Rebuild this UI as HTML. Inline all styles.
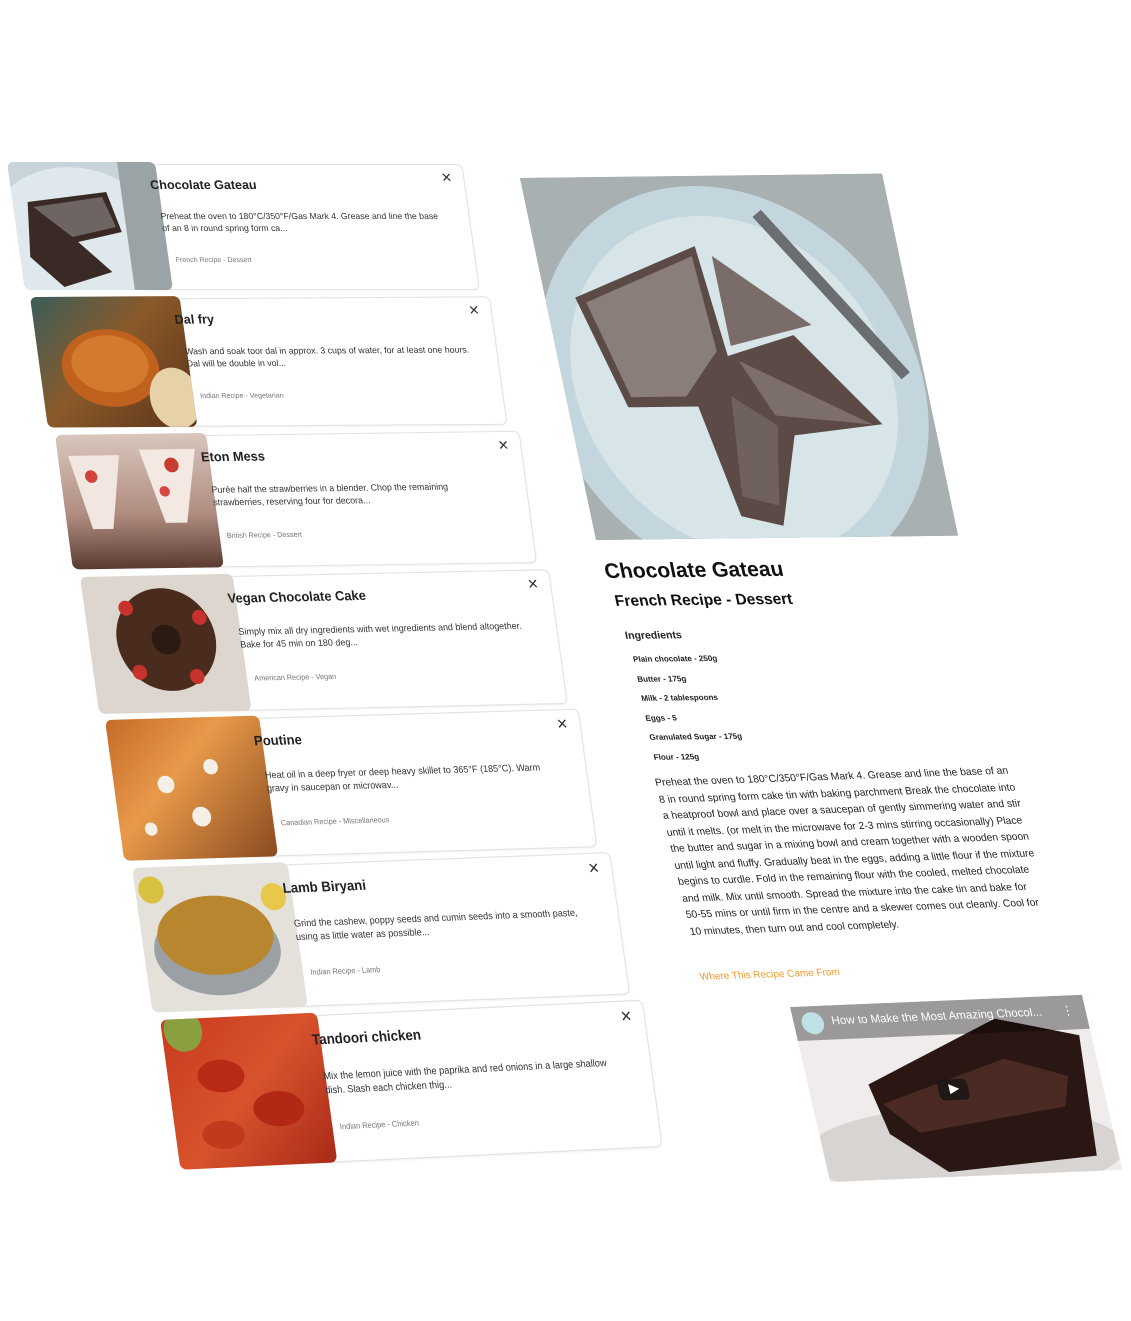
<!DOCTYPE html>
<html><head><meta charset="utf-8"><style>
*{margin:0;padding:0;box-sizing:border-box}
body{width:1131px;height:1321px;background:#fff;position:relative;overflow:hidden;font-family:"Liberation Sans",sans-serif;color:#222}
.card{position:absolute;width:455px;height:128px;transform-origin:0 0}
.card .body{position:absolute;left:118px;top:2px;right:0;bottom:0;border:1px solid #e2e2e2;border-radius:6px;background:#fff;box-shadow:0 1px 2px rgba(0,0,0,.05)}
.card .img{position:absolute;left:0;top:0;width:148px;height:128px;border-radius:6px;overflow:hidden}
.card h3{position:absolute;left:140px;top:16px;font-size:12.5px;font-weight:bold;color:#222}
.card .x{position:absolute;left:432px;top:8px;font-size:13px;color:#333}
.card p{position:absolute;left:146px;top:48px;width:282px;font-size:8.7px;line-height:12px;color:#333}
.card .m{position:absolute;left:155px;top:95px;font-size:7px;color:#777}
.panel{position:absolute;left:520px;top:178px;width:420px;transform-origin:0 0;transform:matrix(1,-0.012,0.21,1,0,0)}
.panel h1{position:absolute;left:2px;top:382px;font-size:21px;font-weight:bold;color:#111;white-space:nowrap}
.panel h2{position:absolute;left:6px;top:415px;font-size:15.5px;font-weight:bold;color:#111;white-space:nowrap}
.panel h4{position:absolute;left:9px;top:452px;font-size:10.5px;font-weight:bold;white-space:nowrap}
.ing{position:absolute;left:12px;font-size:8px;font-weight:bold;white-space:nowrap}
.para{position:absolute;left:8px;top:598px;width:362px;font-size:10.3px;line-height:16.5px;color:#222;transform:rotate(-1.3deg);transform-origin:0 0}
.link{position:absolute;left:12px;top:794px;font-size:10px;color:#f39a2d;transform:rotate(-1.3deg);transform-origin:0 0;white-space:nowrap}
.video{position:absolute;left:790px;top:1007px;width:292px;height:175px;transform-origin:0 0;transform:matrix(1,-0.042,0.23,1,0,0);overflow:hidden;background:#f1efee}
</style></head><body>

<div class="card" style="left:7px;top:162px;transform:matrix(1,0,0.14,1,0,0)">
<div class="body"></div>
<div class="img" style="background:#c8d4da"><svg width="148" height="128"><ellipse cx="60" cy="75" rx="85" ry="70" fill="#dfe8ec"/><path d="M15 40 L95 30 L105 70 L60 80 L90 110 L40 125 L10 95Z" fill="#3a2a26"/><path d="M20 45 L90 35 L100 65 L55 75Z" fill="#6e6462"/><rect x="110" y="0" width="40" height="128" fill="#9aa4a6"/></svg></div>
<h3>Chocolate Gateau</h3><span class="x">✕</span>
<p>Preheat the oven to 180°C/350°F/Gas Mark 4. Grease and line the base of an 8 in round spring form ca...</p>
<span class="m">French Recipe - Dessert</span></div>

<div class="card" style="left:30px;top:297px;transform:matrix(1.01,-0.006,0.14,1.02,0,0)">
<div class="body"></div>
<div class="img" style="background:linear-gradient(135deg,#3a5d5a,#8a5a2a 45%,#5a3218)"><svg width="148" height="128"><ellipse cx="70" cy="70" rx="48" ry="38" fill="#c0621d"/><ellipse cx="70" cy="66" rx="38" ry="28" fill="#d27b2e"/><ellipse cx="130" cy="100" rx="25" ry="30" fill="#e6d2a6"/></svg></div>
<h3>Dal fry</h3><span class="x">✕</span>
<p>Wash and soak toor dal in approx. 3 cups of water, for at least one hours. Dal will be double in vol...</p>
<span class="m">Indian Recipe - Vegetarian</span></div>

<div class="card" style="left:55px;top:435px;transform:matrix(1.02,-0.014,0.14,1.05,0,0)">
<div class="body"></div>
<div class="img" style="background:linear-gradient(180deg,#d9c6bc,#b08c80 60%,#5a3a30)"><svg width="148" height="128"><path d="M10 20 L60 20 L45 90 L25 90Z" fill="#f1e6e0"/><path d="M80 15 L135 15 L118 85 L97 85Z" fill="#f3e8e2"/><circle cx="30" cy="40" r="6" fill="#d2423a"/><circle cx="110" cy="30" r="7" fill="#c93a32"/><circle cx="100" cy="55" r="5" fill="#d4463e"/></svg></div>
<h3>Eton Mess</h3><span class="x">✕</span>
<p>Purée half the strawberries in a blender. Chop the remaining strawberries, reserving four for decora...</p>
<span class="m">British Recipe - Dessert</span></div>

<div class="card" style="left:80px;top:577px;transform:matrix(1.03,-0.022,0.15,1.07,0,0)">
<div class="body"></div>
<div class="img" style="background:#ddd6cf"><svg width="148" height="128"><circle cx="75" cy="60" r="48" fill="#4a2c1e"/><circle cx="75" cy="60" r="14" fill="#2a1a12"/><circle cx="40" cy="30" r="7" fill="#c8322c"/><circle cx="110" cy="40" r="7" fill="#c8322c"/><circle cx="100" cy="95" r="7" fill="#c8322c"/><circle cx="45" cy="90" r="7" fill="#c8322c"/></svg></div>
<h3>Vegan Chocolate Cake</h3><span class="x">✕</span>
<p>Simply mix all dry ingredients with wet ingredients and blend altogether. Bake for 45 min on 180 deg...</p>
<span class="m">American Recipe - Vegan</span></div>

<div class="card" style="left:105px;top:720px;transform:matrix(1.04,-0.03,0.15,1.1,0,0)">
<div class="body"></div>
<div class="img" style="background:linear-gradient(135deg,#c46a28,#e89a4a 40%,#8a4a20)"><svg width="148" height="128"><circle cx="50" cy="60" r="8" fill="#f5f0e6"/><circle cx="80" cy="90" r="9" fill="#f5f0e6"/><circle cx="95" cy="45" r="7" fill="#f5f0e6"/><circle cx="30" cy="100" r="6" fill="#f5f0e6"/></svg></div>
<h3>Poutine</h3><span class="x">✕</span>
<p>Heat oil in a deep fryer or deep heavy skillet to 365°F (185°C). Warm gravy in saucepan or microwav...</p>
<span class="m">Canadian Recipe - Miscellaneous</span></div>

<div class="card" style="left:132px;top:868px;transform:matrix(1.05,-0.04,0.16,1.13,0,0)">
<div class="body"></div>
<div class="img" style="background:#e4e0da"><svg width="148" height="128"><ellipse cx="70" cy="75" rx="60" ry="40" fill="#9aa0a4"/><ellipse cx="70" cy="62" rx="55" ry="35" fill="#b8862e"/><circle cx="130" cy="30" r="12" fill="#e8c84a"/><circle cx="15" cy="20" r="12" fill="#d8c040"/></svg></div>
<h3>Lamb Biryani</h3><span class="x">✕</span>
<p>Grind the cashew, poppy seeds and cumin seeds into a smooth paste, using as little water as possible...</p>
<span class="m">Indian Recipe - Lamb</span></div>

<div class="card" style="left:160px;top:1020px;transform:matrix(1.06,-0.05,0.16,1.17,0,0)">
<div class="body"></div>
<div class="img" style="background:linear-gradient(135deg,#c83a1e,#d8532c 50%,#a82a18)"><svg width="148" height="128"><circle cx="20" cy="10" r="18" fill="#8aa040"/><ellipse cx="50" cy="50" rx="22" ry="14" fill="#b82a16"/><ellipse cx="100" cy="80" rx="24" ry="15" fill="#b22814"/><ellipse cx="45" cy="100" rx="20" ry="12" fill="#c23a1c"/></svg></div>
<h3>Tandoori chicken</h3><span class="x">✕</span>
<p>Mix the lemon juice with the paprika and red onions in a large shallow dish. Slash each chicken thig...</p>
<span class="m">Indian Recipe - Chicken</span></div>

<div class="panel">
<div style="position:absolute;left:0;top:0;width:362px;height:362px;overflow:hidden;background:#8f9698">
<svg width="362" height="362"><rect width="362" height="362" fill="#a9b0b2"/><ellipse cx="170" cy="210" rx="190" ry="200" fill="#c4d6dd"/><ellipse cx="170" cy="210" rx="160" ry="170" fill="#d7e4e8"/>
<path d="M30 120 L160 70 L170 180 L240 160 L310 250 L220 260 L190 350 L150 340 L130 230 L60 230 Z" fill="#5b4a45"/>
<path d="M40 125 L155 80 L160 175 L120 220 L65 220 Z" fill="#8a7e7a"/><path d="M175 80 L260 150 L175 170Z" fill="#7a6c68"/><path d="M180 185 L300 250 L205 240Z" fill="#7c6f6a"/><path d="M165 220 L205 250 L190 330 L155 320Z" fill="#6f625e"/>
<rect x="280" y="20" width="12" height="200" fill="#6a6e70" transform="rotate(-35 286 120)"/></svg></div>
<h1>Chocolate Gateau</h1>
<h2>French Recipe - Dessert</h2>
<h4>Ingredients</h4>
<div class="ing" style="top:477px">Plain chocolate - 250g</div>
<div class="ing" style="top:497px">Butter - 175g</div>
<div class="ing" style="top:516px">Milk - 2 tablespoons</div>
<div class="ing" style="top:536px">Eggs - 5</div>
<div class="ing" style="top:555px">Granulated Sugar - 175g</div>
<div class="ing" style="top:575px">Flour - 125g</div>
<div class="para">Preheat the oven to 180°C/350°F/Gas Mark 4. Grease and line the base of an 8 in round spring form cake tin with baking parchment Break the chocolate into a heatproof bowl and place over a saucepan of gently simmering water and stir until it melts. (or melt in the microwave for 2-3 mins stirring occasionally) Place the butter and sugar in a mixing bowl and cream together with a wooden spoon until light and fluffy. Gradually beat in the eggs, adding a little flour if the mixture begins to curdle. Fold in the remaining flour with the cooled, melted chocolate and milk. Mix until smooth. Spread the mixture into the cake tin and bake for 50-55 mins or until firm in the centre and a skewer comes out cleanly. Cool for 10 minutes, then turn out and cool completely.</div>
<div class="link">Where This Recipe Came From</div>
</div>

<div class="video">
<svg width="292" height="175" style="position:absolute;left:0;top:0"><rect width="292" height="175" fill="#efeceb"/><ellipse cx="140" cy="150" rx="160" ry="45" fill="#d8d4d2"/><path d="M60 80 L200 20 L280 40 L270 160 L120 170 L70 130Z" fill="#2a1612"/><path d="M70 100 L200 60 L260 80 L250 110 L100 130Z" fill="#4a2a22"/><rect x="0" y="0" width="292" height="34" fill="rgba(0,0,0,.35)"/></svg>
<div style="position:absolute;left:8px;top:6px;width:22px;height:22px;border-radius:50%;background:#bfe0e4"></div>
<div style="position:absolute;left:38px;top:10px;color:#fff;font-size:11.5px;white-space:nowrap">How to Make the Most Amazing Chocol...</div>
<div style="position:absolute;left:268px;top:8px;color:#fff;font-size:12px">⋮</div>
<div style="position:absolute;left:128px;top:78px;width:30px;height:21px;border-radius:5px;background:rgba(20,20,20,.8)"><div style="position:absolute;left:11px;top:5px;border-left:10px solid #fff;border-top:5.5px solid transparent;border-bottom:5.5px solid transparent"></div></div>
</div>

</body></html>
